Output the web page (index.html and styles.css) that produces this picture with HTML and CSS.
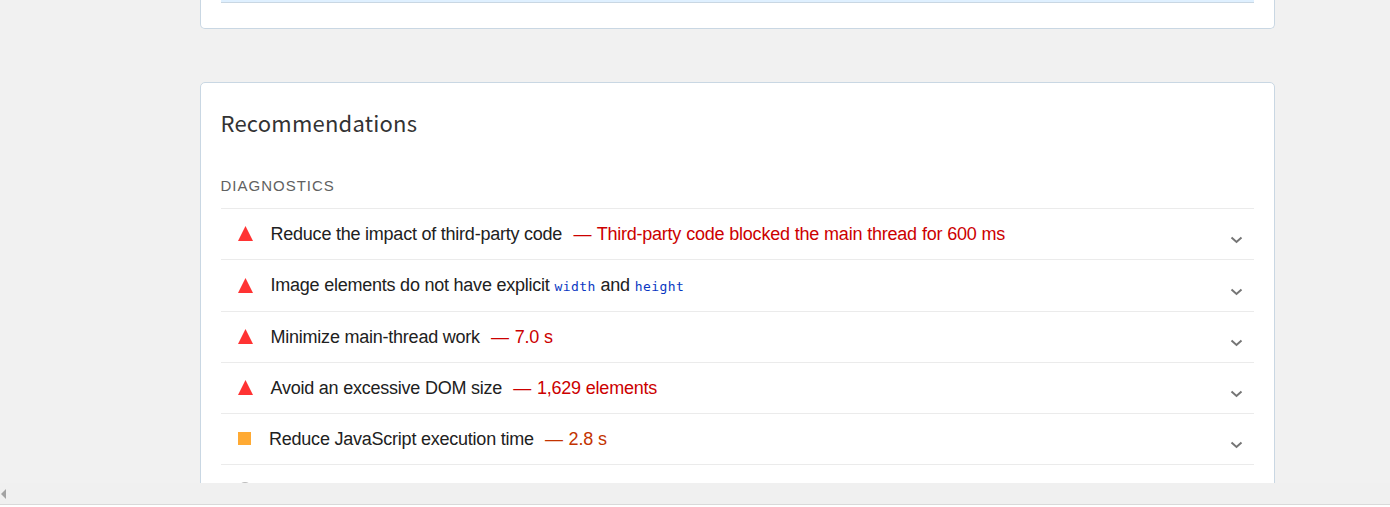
FILE: index.html
```html
<!DOCTYPE html>
<html lang="en">
<head>
<meta charset="utf-8">
<title>Recommendations</title>
<link rel="stylesheet" href="styles.css">
</head>
<body>
<main class="viewport">
  <section class="card card-previous"><div class="notice"></div></section>
  <section class="card card-main">
    <h1 class="title">Recommendations</h1>
    <h2 class="group">DIAGNOSTICS</h2>
    <ul class="audits">
      <li class="audit">
        <span class="mark triangle"></span>
        <span class="label">Reduce the impact of third-party code</span><span class="value fail">— Third-party code blocked the main thread for 600 ms</span>
        <svg class="chevron" width="13" height="8" viewBox="0 0 13 8"><path d="M1.5 1.5 6.5 6 11.5 1.5"/></svg>
      </li>
      <li class="audit tall">
        <span class="mark triangle"></span>
        <span class="label">Image elements do not have explicit <code>width</code> and <code>height</code></span>
        <svg class="chevron" width="13" height="8" viewBox="0 0 13 8"><path d="M1.5 1.5 6.5 6 11.5 1.5"/></svg>
      </li>
      <li class="audit">
        <span class="mark triangle"></span>
        <span class="label">Minimize main-thread work</span><span class="value fail">— 7.0 s</span>
        <svg class="chevron" width="13" height="8" viewBox="0 0 13 8"><path d="M1.5 1.5 6.5 6 11.5 1.5"/></svg>
      </li>
      <li class="audit">
        <span class="mark triangle"></span>
        <span class="label">Avoid an excessive DOM size</span><span class="value fail">— 1,629 elements</span>
        <svg class="chevron" width="13" height="8" viewBox="0 0 13 8"><path d="M1.5 1.5 6.5 6 11.5 1.5"/></svg>
      </li>
      <li class="audit">
        <span class="mark square"></span>
        <span class="label">Reduce JavaScript execution time</span><span class="value average">— 2.8 s</span>
        <svg class="chevron" width="13" height="8" viewBox="0 0 13 8"><path d="M1.5 1.5 6.5 6 11.5 1.5"/></svg>
      </li>
      <li class="audit">
        <span class="mark circle"></span>
      </li>
    </ul>
  </section>
</main>
<div class="scrollbar"><svg width="6" height="10" viewBox="0 0 6 10"><path d="M6 0v10L1 5z"/></svg></div>
</body>
</html>
```
FILE: styles.css
```css
* { box-sizing: border-box; }
body {
  margin: 0;
  height: 507px;
  overflow: hidden;
  background: #fff;
  color: #212121;
  font-family: "Liberation Sans", Arial, sans-serif;
}
.viewport {
  height: 483px;
  overflow: hidden;
  padding-left: 200px;
  background: #f1f1f1;
}
.card {
  width: 1075px;
  padding: 0 20px;
  border: 1px solid #c9d7e3;
  border-radius: 5px;
  background: #fff;
}
.card-previous {
  height: 29px;
  margin-bottom: 53px;
  border-top: 0;
  border-radius: 0 0 5px 5px;
}
.notice {
  height: 3px;
  background: #dff0ff;
  border-bottom: 1px solid #c9d7e3;
}
.card-main { height: 520px; }
.title {
  margin: 0 0 0 -0.5px;
  padding-top: 21px;
  height: 85px;
  font: 400 22px/36px "Noto Sans CJK SC", sans-serif;
  letter-spacing: 0.22px;
  color: #333;
}
.group {
  margin: 0 0 0 -0.5px;
  height: 40px;
  font-size: 15px;
  font-weight: 400;
  line-height: 36px;
  letter-spacing: 1px;
  color: #616161;
}
.audits { margin: 0; padding: 0; list-style: none; }
.audit {
  display: flex;
  height: 51px;
  padding: 0 11px 0 17px;
  border-top: 1px solid #ebebeb;
  font-size: 18px;
  line-height: 50px;
  letter-spacing: -0.23px;
  white-space: nowrap;
}
.tall { height: 52px; }
.mark { flex: none; }
.triangle {
  width: 15px;
  height: 15px;
  margin: 17px 17.5px 0 0;
  background: #f33;
  clip-path: polygon(50% 0, 100% 100%, 0 100%);
}
.tall .triangle { margin-top: 18px; }
.square {
  width: 13px;
  height: 13px;
  margin: 18px 18px 0 0;
  background: #fa3;
}
.circle {
  width: 14px;
  height: 14px;
  margin-top: 17px;
  border: 2px solid #bbb;
  border-radius: 50%;
}
.value {
  margin-left: 11.3px;
  word-spacing: 0.25px;
}
.value::first-letter { letter-spacing: 0.5px; }
.fail { color: #c00; }
.average { color: #c33300; }
.label code {
  font-family: "DejaVu Sans Mono", monospace;
  font-size: 13px;
  letter-spacing: 0.45px;
  color: #0938c2;
}
.chevron {
  flex: none;
  margin: 27px 0 0 auto;
  fill: none;
  stroke: #757575;
  stroke-width: 2;
}
.tall .chevron { margin-top: 28px; }
.scrollbar {
  display: flex;
  align-items: center;
  height: 22px;
  background: #f0f0f0;
  border-bottom: 1px solid #d9d9d9;
}
.scrollbar svg { fill: #a3a3a3; }
```
